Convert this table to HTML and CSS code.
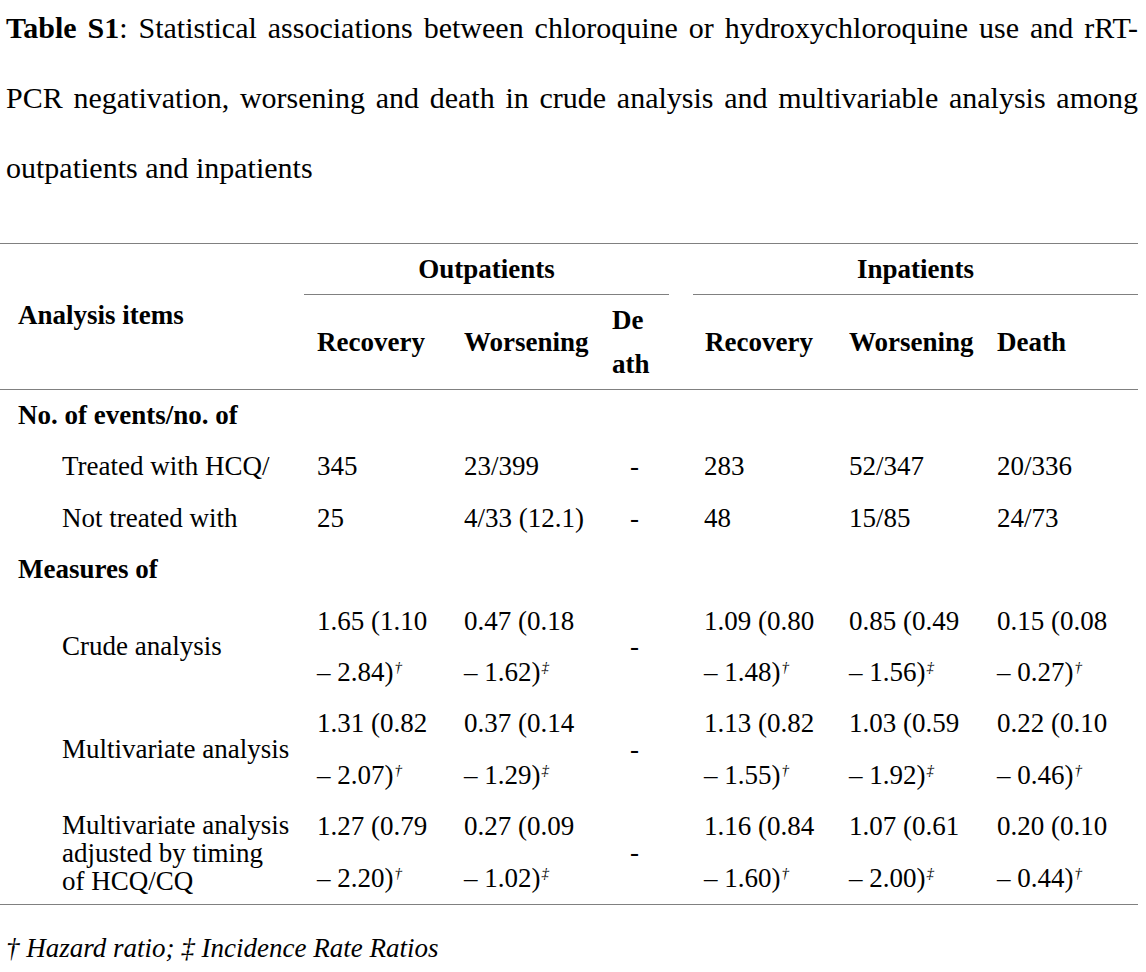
FILE: index.html
```html
<!DOCTYPE html>
<html lang="en">
<head>
<meta charset="utf-8">
<title>Table S1</title>
<link rel="stylesheet" href="styles.css">
</head>
<body>
<div class="page">
  <p class="caption"><b>Table S1</b>: Statistical associations between chloroquine or hydroxychloroquine use and rRT-PCR negativation, worsening and death in crude analysis and multivariable analysis among outpatients and inpatients</p>

  <table class="results">
    <colgroup>
      <col class="c-label">
      <col class="c-wide">
      <col class="c-wide">
      <col class="c-narrow">
      <col class="c-gap">
      <col class="c-inrec">
      <col class="c-wide">
      <col class="c-last">
    </colgroup>
    <thead>
      <tr class="group-row">
        <th rowspan="2" class="items">Analysis items</th>
        <th colspan="3" class="group">Outpatients</th>
        <th rowspan="2" class="gap"></th>
        <th colspan="3" class="group">Inpatients</th>
      </tr>
      <tr class="sub-row">
        <th>Recovery</th>
        <th>Worsening</th>
        <th>De<br>ath</th>
        <th>Recovery</th>
        <th>Worsening</th>
        <th>Death</th>
      </tr>
    </thead>
    <tbody>
      <tr>
        <td class="section">No. of events/no. of</td>
        <td></td><td></td><td></td><td></td><td></td><td></td><td></td>
      </tr>
      <tr>
        <td class="label">Treated with HCQ/</td>
        <td>345</td>
        <td>23/399</td>
        <td class="dash">-</td>
        <td></td>
        <td>283</td>
        <td>52/347</td>
        <td>20/336</td>
      </tr>
      <tr>
        <td class="label">Not treated with</td>
        <td>25</td>
        <td>4/33 (12.1)</td>
        <td class="dash">-</td>
        <td></td>
        <td>48</td>
        <td>15/85</td>
        <td>24/73</td>
      </tr>
      <tr>
        <td class="section">Measures of</td>
        <td></td><td></td><td></td><td></td><td></td><td></td><td></td>
      </tr>
      <tr>
        <td class="label">Crude analysis</td>
        <td>1.65 (1.10<br>– 2.84)<sup>†</sup></td>
        <td>0.47 (0.18<br>– 1.62)<sup>‡</sup></td>
        <td class="dash">-</td>
        <td></td>
        <td>1.09 (0.80<br>– 1.48)<sup>†</sup></td>
        <td>0.85 (0.49<br>– 1.56)<sup>‡</sup></td>
        <td>0.15 (0.08<br>– 0.27)<sup>†</sup></td>
      </tr>
      <tr>
        <td class="label">Multivariate analysis</td>
        <td>1.31 (0.82<br>– 2.07)<sup>†</sup></td>
        <td>0.37 (0.14<br>– 1.29)<sup>‡</sup></td>
        <td class="dash">-</td>
        <td></td>
        <td>1.13 (0.82<br>– 1.55)<sup>†</sup></td>
        <td>1.03 (0.59<br>– 1.92)<sup>‡</sup></td>
        <td>0.22 (0.10<br>– 0.46)<sup>†</sup></td>
      </tr>
      <tr>
        <td class="label tight">Multivariate analysis<br>adjusted by timing<br>of HCQ/CQ</td>
        <td>1.27 (0.79<br>– 2.20)<sup>†</sup></td>
        <td>0.27 (0.09<br>– 1.02)<sup>‡</sup></td>
        <td class="dash">-</td>
        <td></td>
        <td>1.16 (0.84<br>– 1.60)<sup>†</sup></td>
        <td>1.07 (0.61<br>– 2.00)<sup>‡</sup></td>
        <td>0.20 (0.10<br>– 0.44)<sup>†</sup></td>
      </tr>
    </tbody>
  </table>

  <p class="note">† Hazard ratio; ‡ Incidence Rate Ratios</p>
</div>
</body>
</html>
```

FILE: styles.css
```css
html, body {
  margin: 0;
  padding: 0;
  background: #ffffff;
}

body {
  font-family: "Liberation Serif", "Times New Roman", serif;
  color: #000000;
}

.page {
  width: 1138px;
}

.caption {
  margin: -7px 0 40px 6px;
  font-size: 30px;
  line-height: 70px;
  text-align: justify;
}

.caption b {
  font-weight: bold;
}

.results {
  width: 1138px;
  table-layout: fixed;
  border-collapse: separate;
  border-spacing: 0;
  font-size: 27px;
  border-top: 1px solid #808080;
  border-bottom: 1px solid #808080;
}

.c-label { width: 304px; }
.c-wide { width: 148px; }
.c-narrow { width: 69px; }
.c-gap { width: 24px; }
.c-inrec { width: 144px; }
.c-last { width: 153px; }

.results th {
  font-weight: bold;
  text-align: left;
  vertical-align: middle;
  padding: 0 0 0 12px;
  white-space: nowrap;
}

.group-row th.group {
  height: 50px;
  line-height: 50px;
  padding: 0;
  text-align: center;
  border-bottom: 1px solid #808080;
}

.results th.items {
  padding-left: 18px;
  padding-bottom: 3px;
  border-bottom: 1px solid #808080;
}

.results th.gap {
  padding: 0;
  border-bottom: 1px solid #808080;
}

.sub-row th {
  line-height: 44px;
  padding-top: 3px;
  padding-bottom: 3px;
  border-bottom: 1px solid #808080;
}

.sub-row th:first-child {
  padding-left: 13px;
}

.results td {
  line-height: 51.4px;
  padding: 0 0 0 12px;
  vertical-align: middle;
  white-space: nowrap;
}

.results td:nth-child(2) {
  padding-left: 13px;
}

.results td:nth-child(6) {
  padding-left: 11px;
}

.results td.section {
  font-weight: bold;
  padding-left: 18px;
}

.results td.label {
  padding-left: 62px;
}

.results td.tight {
  line-height: 28px;
}

.results td.dash {
  text-align: center;
  padding: 0;
}

.results sup {
  font-size: 15px;
  font-style: italic;
  line-height: 0;
  vertical-align: 9px;
  margin-left: 1px;
}

.note {
  margin: 8px 0 0 6px;
  font-size: 27px;
  line-height: 70px;
  font-style: italic;
}
```
